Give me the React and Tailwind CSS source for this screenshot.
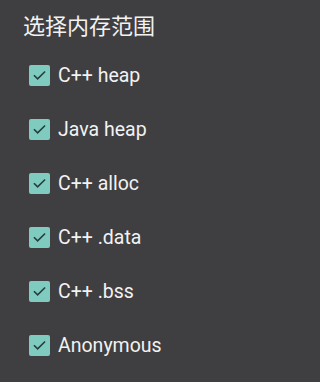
import React from 'react';

const items = ['C++ heap', 'Java heap', 'C++ alloc', 'C++ .data', 'C++ .bss', 'Anonymous'];

const CheckBox = () => (
    <span className="w-[21px] h-[21px] rounded-[2px] bg-[#80cbc0] flex items-center justify-center shrink-0">
        <svg width="15" height="15" viewBox="0 0 24 24" fill="none">
            <path d="M4 12.5l5 5L20 6.5" stroke="#263f3c" strokeWidth="2.6" strokeLinecap="square" />
        </svg>
    </span>
);

export default function App() {
    return (
        <div
            className="w-[320px] h-[382px] bg-[#3f3e40] text-[#f2f2f2] overflow-hidden"
            style={{ fontFamily: 'Roboto, "Noto Sans CJK SC", sans-serif' }}
        >
            <div className="pl-[23px] pt-[13px] text-[22px] leading-[28px]">选择内存范围</div>
            <ul className="mt-[24px] pl-[29px] flex flex-col gap-[33px]">
                {items.map((item) => (
                    <li key={item} className="flex items-center gap-[8px] h-[21px]">
                        <CheckBox />
                        <span className="text-[19.5px] leading-[21px]">{item}</span>
                    </li>
                ))}
            </ul>
        </div>
    );
}
